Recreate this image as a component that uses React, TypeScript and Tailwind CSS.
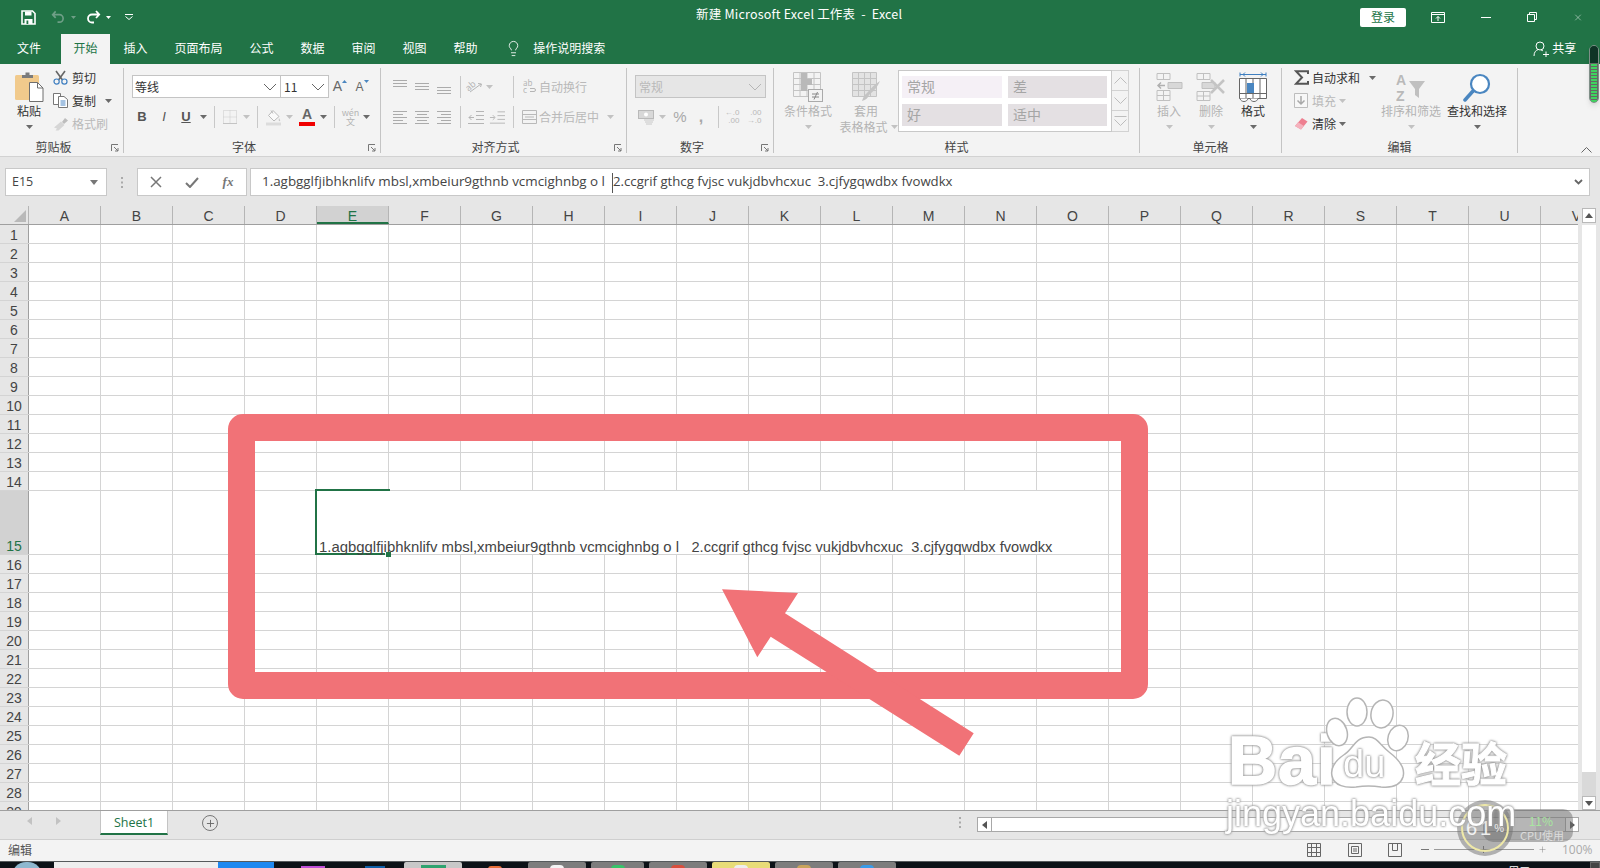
import React from 'react';
import { Lightbulb, Plus, X } from 'lucide-react';

const CJK = "font-['Noto_Sans_CJK_SC','Liberation_Sans',sans-serif]";

const Cell: React.FC<{ className?: string; children?: React.ReactNode }> = ({ className = '', children }) => (
  <div className={`flex shrink-0 items-center justify-center whitespace-nowrap ${className}`}>{children}</div>
);

const Caret = ({ dim = false }: { dim?: boolean }) => (
  <svg width="7" height="4" viewBox="0 0 7 4" className="shrink-0">
    <path d="M0 0h7L3.5 4z" fill={dim ? '#c2c2c2' : '#6a6a6a'} />
  </svg>
);

const Sep = ({ className = '' }: { className?: string }) => <div className={`h-[22px] w-px shrink-0 bg-[#c8c8c8] ${className}`} />;

const Chevron = ({ color = '#666' }: { color?: string }) => (
  <svg width="14" height="8" viewBox="0 0 14 8"><path d="M1 1l6 6 6-6" fill="none" stroke={color} strokeWidth="1" /></svg>
);

const Launcher = () => (
  <svg width="8" height="8" viewBox="0 0 8 8" className="absolute bottom-[1px] right-[4px]">
    <path d="M.5 7V.5H7M3 3l4 4M7 4v3H4" fill="none" stroke="#777" strokeWidth="1" />
  </svg>
);

const Lines = ({ rows, color = '#ababab' }: { rows: [number, number, number][]; color?: string }) => (
  <svg width="16" height="16" viewBox="0 0 16 16">
    {rows.map(([x1, x2, y], i) => <path key={i} d={`M${x1} ${y}.5H${x2}`} stroke={color} strokeWidth="1" />)}
  </svg>
);

const Group: React.FC<{ className: string; label: string; launcher?: boolean; children: React.ReactNode }> = ({ className, label, launcher, children }) => (
  <div className={`relative mt-[4px] flex h-[85px] shrink-0 flex-col border-r border-[#c4c4c4] ${className}`}>
    <div className="h-[70px] shrink-0">{children}</div>
    <div className={`h-[15px] text-center text-[12px] leading-[18px] text-[#444] ${launcher ? 'pr-[16px]' : ''}`}>{label}</div>
    {launcher && <Launcher />}
  </div>
);

const BigButton: React.FC<{ className: string; icon: React.ReactNode; dim?: boolean; label: string; label2?: string }> = ({ className, icon, dim, label, label2 }) => (
  <div className={`flex shrink-0 flex-col items-center ${className}`}>
    <div className="mt-[4px] flex h-[30px] items-center justify-center">{icon}</div>
    <div className={`h-[18px] whitespace-nowrap text-[12px] leading-[18px] ${dim ? 'text-[#b4b4b4]' : 'text-[#333]'}`}>{label}</div>
    {label2 ? (
      <div className="-mt-[1px] flex h-[16px] items-center gap-[3px] whitespace-nowrap pl-[5px] text-[12px] leading-[16px] text-[#b4b4b4]">{label2}<Caret dim /></div>
    ) : (
      <div className="mt-[4px] flex h-[6px] items-center"><Caret dim={dim} /></div>
    )}
  </div>
);

const PasteIcon = () => (
  <svg width="29" height="30" viewBox="0 0 29 30">
    <rect x="0" y="3" width="24" height="25" rx="1.5" fill="#f1ca8c" />
    <path d="M7 6V3h3.500V.5h4V3H18v3z" fill="#7b7b7b" />
    <path d="M14.500 10.500h8l5.500 5.500v13.500H14.500z" fill="#fff" stroke="#6f6f6f" />
    <path d="M22.500 10.500V16H28" fill="none" stroke="#6f6f6f" />
  </svg>
);
const ScissorsIcon = () => (
  <svg width="15" height="15" viewBox="0 0 15 15">
    <path d="M3 1l6.500 9M12 1L5.500 10" stroke="#666" strokeWidth="1.600" fill="none" />
    <circle cx="3.600" cy="11.600" r="2.600" fill="none" stroke="#3f7fc0" strokeWidth="1.200" />
    <circle cx="11.400" cy="11.600" r="2.600" fill="none" stroke="#3f7fc0" strokeWidth="1.200" />
  </svg>
);
const CopyIcon = () => (
  <svg width="15" height="15" viewBox="0 0 15 15">
    <path d="M.5.500h7v11h-7z" fill="#fff" stroke="#777" />
    <path d="M5.500 3.500H11l3.500 3v8h-9z" fill="#fff" stroke="#777" />
    <path d="M7.500 8h5M7.500 10h5M7.500 12h5" stroke="#4a86c5" />
  </svg>
);
const BrushIcon = () => (
  <svg width="16" height="14" viewBox="0 0 16 14">
    <path d="M9 5l3-4 3 2.500-4 3.500z" fill="#bdbdbd" />
    <path d="M1 10.500L8 4.500l3.500 3.500-6 5.500H2.500L4 11.500z" fill="#d6d6d6" />
  </svg>
);
const SaveIcon = () => (
  <svg width="15" height="15" viewBox="0 0 15 15">
    <path d="M1 1h10.500L14 3.500V14H1z" fill="none" stroke="#fff" strokeWidth="1.600" />
    <path d="M4 1.500h6.500v4H4zM3.500 9h8v5h-8z" fill="#fff" />
    <path d="M5.500 10.500h1.800V14H5.500z" fill="#217346" />
  </svg>
);
const UndoIcon = ({ color }: { color: string }) => (
  <svg width="15" height="14" viewBox="0 0 15 14">
    <path d="M5 1L1.800 4.500 5 8M2.500 4.500h6.500a4 4 0 0 1 0 8H7" fill="none" stroke={color} strokeWidth="1.800" />
  </svg>
);
const RedoIcon = () => (
  <svg width="15" height="14" viewBox="0 0 15 14">
    <path d="M10 1l3.200 3.500L10 8M12.500 4.500H6a4 4 0 0 0 0 8h2" fill="none" stroke="#fff" strokeWidth="1.800" />
  </svg>
);
const BorderIcon = () => (
  <svg width="14" height="14" viewBox="0 0 14 14">
    <path d="M.5.500h13v13H.5zM7 .5v13M.5 7h13" fill="none" stroke="#c9c9c9" strokeDasharray="1 1" />
    <path d="M0 13.500h14" stroke="#c4c4c4" />
  </svg>
);
const BucketIcon = () => (
  <svg width="16" height="17" viewBox="0 0 16 17">
    <path d="M7 1.500l6 6-5 4.500-5.500-5.500z" fill="#fafafa" stroke="#b9b9b9" />
    <path d="M5 1.500l2 3" stroke="#b9b9b9" />
    <path d="M13 9c1 1.500 1.500 2.500 1 3s-2 0-1-3z" fill="#c8c8c8" />
    <path d="M0 15h15" stroke="#dcdcdc" strokeWidth="3" />
  </svg>
);
const OrientIcon = () => (
  <svg width="17" height="15" viewBox="0 0 17 15">
    <text x="0" y="10" fontSize="9" fill="#b5b5b5" transform="rotate(-40 5 8)">ab</text>
    <path d="M4 13L15 5M12 4.500l3.500.5-1 3" fill="none" stroke="#b5b5b5" />
  </svg>
);
const WrapIcon = () => (
  <svg width="14" height="15" viewBox="0 0 14 15">
    <text x="0" y="7" fontSize="8" fill="#b5b5b5">ab</text>
    <text x="0" y="14" fontSize="8" fill="#b5b5b5">c</text>
    <path d="M7 9.500h4a1.500 1.500 0 0 1 0 3H7" fill="none" stroke="#b5b5b5" />
  </svg>
);
const MergeIcon = () => (
  <svg width="15" height="14" viewBox="0 0 15 14">
    <path d="M.5.500h14v13H.5zM.5 4.500h14M.5 9.500h14" fill="none" stroke="#b9b9b9" />
    <path d="M3 7h9" stroke="#b9b9b9" />
  </svg>
);
const IndentIcon = ({ flip = false }: { flip?: boolean }) => (
  <svg width="17" height="13" viewBox="0 0 17 13">
    <path d="M9 .5h8M9 4.500h8M9 8.500h8M1 12.500h16" stroke="#b5b5b5" />
    {flip ? <path d="M1 6.500h5M4 4l2.500 2.500L4 9" fill="none" stroke="#b5b5b5" /> : <path d="M2 6.500h5M4.500 4L2 6.500 4.500 9" fill="none" stroke="#b5b5b5" />}
  </svg>
);
const CondIcon = () => (
  <svg width="30" height="30" viewBox="0 0 30 30">
    <path d="M.5.500h27v24H.5zM7 .5v24M14 .5v24M21 .5v24M.5 6.500h27M.5 12.500h27M.5 18.500h27" fill="#f3f3f3" stroke="#c4c4c4" />
    <path d="M8 1h6v6h5v6h-5v6H8z" fill="#b9b9b9" />
    <rect x="15.500" y="17.500" width="14" height="12" fill="#f3f3f3" stroke="#aaa" />
    <path d="M19 22h7M19 25h7M24.500 20l-3.500 7.500" stroke="#888" fill="none" />
  </svg>
);
const TableIcon = () => (
  <svg width="29" height="30" viewBox="0 0 29 30">
    <path d="M.5.500h24v24H.5zM6.500.5v24M12.500.5v24M18.500.5v24M.5 6.500h24M.5 12.500h24M.5 18.500h24" fill="#e3e3e3" stroke="#c4c4c4" />
    <path d="M28 9c-2 5-6 10-11 14-1 3-3 5-7 6 1-3 2-6 5-8 4-5 8-9 13-12z" fill="#c4c4c4" />
  </svg>
);
const InsertIcon = () => (
  <svg width="27" height="28" viewBox="0 0 27 28">
    <path d="M1 .5h13v6H1zM7.500.5v6M1 17.500h13v10H1zM7.500 17.500v10M1 22.500h13" fill="none" stroke="#c0c0c0" />
    <path d="M12 9.500h14v6H12z" fill="#d8d8d8" stroke="#c0c0c0" />
    <path d="M2 12.500h7M5 9.500l-3 3 3 3" fill="none" stroke="#b0b0b0" strokeWidth="1.500" />
  </svg>
);
const DeleteIcon = () => (
  <svg width="30" height="28" viewBox="0 0 30 28">
    <path d="M1 .5h13v6H1zM7.500.5v6M1 18.500h13v9H1zM7.500 18.500v9M1 23h13" fill="none" stroke="#c0c0c0" />
    <path d="M6 9.500h13v6H6z" fill="#d8d8d8" stroke="#c0c0c0" />
    <path d="M15 7l13 13M28 7L15 20" stroke="#c4c4c4" strokeWidth="2.500" />
  </svg>
);
const FormatIcon = () => (
  <svg width="28" height="31" viewBox="0 0 28 31">
    <path d="M1 2.500h26M1 .5v4M27 .5v4M4 2.500l2-2M4 2.500l2 2M24 2.500l-2-2M24 2.500l-2 2" stroke="#3f7fc0" fill="none" />
    <path d="M.5 6.500h27v20H.5zM7 6.500v20M14 6.500v20M21 6.500v20M.5 21.500h27" fill="#fff" stroke="#666" />
    <rect x="8" y="11" width="7" height="10" fill="#4a86c0" />
    <path d="M1 26.500c1 4 7 4 8 0M11 26.500c1 4 7 4 8 0" fill="#fff" stroke="#666" />
  </svg>
);
const SortIcon = () => (
  <svg width="30" height="31" viewBox="0 0 30 31">
    <text x="0" y="13" fontSize="14" fontWeight="700" fill="#b9b9b9" fontFamily="Liberation Sans">A</text>
    <text x="0" y="29" fontSize="14" fontWeight="700" fill="#b9b9b9" fontFamily="Liberation Sans">Z</text>
    <path d="M13 9h16l-6 8v9l-4-3v-6z" fill="#c0c0c0" />
  </svg>
);
const FindIcon = () => (
  <svg width="28" height="29" viewBox="0 0 28 29">
    <circle cx="17" cy="11" r="9" fill="#fff" stroke="#4a86c0" strokeWidth="2.200" />
    <path d="M10 18L2 27" stroke="#4a86c0" strokeWidth="3.500" strokeLinecap="round" />
  </svg>
);
const SigmaIcon = () => (
  <svg width="15" height="15" viewBox="0 0 15 15">
    <path d="M14 4V1.200H2L8 7.500 2 13.800h12V11" fill="none" stroke="#555" strokeWidth="2" />
  </svg>
);

const Toolbar = () => (
  <div className={`flex h-[93px] shrink-0 border-b border-[#d2d2d2] bg-[#f3f3f3] ${CJK}`}>
    <Group className="w-[124px]" label="剪贴板" launcher>
      <div className="flex">
        <BigButton className="w-[58px]" icon={<PasteIcon />} label="粘贴" />
        <div className="-ml-[5px] -mt-[2px] flex flex-col text-[12px] text-[#333]">
          <div className="flex h-[23px] items-center gap-[4px]"><ScissorsIcon /><span>剪切</span></div>
          <div className="flex h-[23px] items-center gap-[4px]"><CopyIcon /><span>复制</span><span className="ml-[5px] flex"><Caret /></span></div>
          <div className="flex h-[23px] items-center gap-[3px] text-[#b9b9b9]"><BrushIcon /><span>格式刷</span></div>
        </div>
      </div>
    </Group>

    <Group className="w-[257px]" label="字体" launcher>
      <div className="pl-[8px] pt-[7px]">
        <div className="flex h-[23px] text-[12px] text-[#333]">
          <div className="flex w-[149px] items-center justify-between border border-[#c4c4c4] bg-white pl-[2px] pr-[3px]">等线<Chevron /></div>
          <div className="flex w-[48px] items-center justify-between border border-l-0 border-[#c4c4c4] bg-white pl-[3px] pr-[3px]">11<Chevron /></div>
          <Cell className="w-[22px] text-[14px] text-[#666]"><span className="font-['Liberation_Sans']">A</span><svg width="5" height="3" viewBox="0 0 5 3" className="-mt-[10px]"><path d="M0 3h5L2.500 0z" fill="#4a86c0" /></svg></Cell>
          <Cell className="w-[22px] text-[12px] text-[#666]"><span className="font-['Liberation_Sans']">A</span><svg width="5" height="3" viewBox="0 0 5 3" className="-mt-[10px]"><path d="M0 0h5L2.500 3z" fill="#4a86c0" /></svg></Cell>
        </div>
        <div className="mt-[8px] flex h-[22px] items-center font-['Liberation_Sans'] text-[13px] text-[#555]">
          <Cell className="w-[20px] font-bold">B</Cell>
          <Cell className="w-[24px] italic">I</Cell>
          <Cell className="w-[20px] font-bold underline">U</Cell>
          <Cell className="w-[15px]"><Caret /></Cell>
          <Sep className="ml-[3px]" />
          <Cell className="w-[29px]"><BorderIcon /></Cell>
          <Cell className="w-[4px]"><Caret dim /></Cell>
          <Sep className="ml-[9px]" />
          <Cell className="ml-[8px] w-[16px]"><BucketIcon /></Cell>
          <Cell className="w-[14px]"><Caret dim /></Cell>
          <Cell className="w-[22px]">
            <div className="flex flex-col items-center">
              <span className="text-[14px] font-bold leading-[13px] text-[#666]">A</span>
              <div className="mt-[1px] h-[4px] w-[16px] bg-[#f00000]" />
            </div>
          </Cell>
          <Cell className="w-[11px]"><Caret /></Cell>
          <Sep className="ml-[5px]" />
          <Cell className="ml-[9px] w-[13px]">
            <div className={`flex flex-col items-center text-[9px] leading-[9px] text-[#b4b4b4] ${CJK}`}><span>wén</span><span>文</span></div>
          </Cell>
          <Cell className="w-[18px]"><Caret /></Cell>
        </div>
      </div>
    </Group>

    <Group className="w-[246px]" label="对齐方式" launcher>
      <div className="pt-[7px] text-[12px] text-[#b9b9b9]">
        <div className="flex h-[23px] items-center">
          <Cell className="ml-[8px] w-[22px]"><Lines rows={[[1, 15, 1], [1, 15, 4], [1, 15, 7]]} /></Cell>
          <Cell className="w-[22px]"><Lines rows={[[1, 15, 4], [1, 15, 7], [1, 15, 10]]} /></Cell>
          <Cell className="w-[22px]"><Lines rows={[[1, 15, 8], [1, 15, 11], [1, 15, 14]]} /></Cell>
          <Sep className="ml-[5px]" />
          <Cell className="ml-[4px] w-[18px]"><OrientIcon /></Cell>
          <Cell className="w-[12px]"><Caret dim /></Cell>
          <Sep className="ml-[18px]" />
          <Cell className="ml-[8px] w-[16px]"><WrapIcon /></Cell>
          <span className="ml-[1px]">自动换行</span>
        </div>
        <div className="mt-[8px] flex h-[22px] items-center">
          <Cell className="ml-[8px] w-[22px]"><Lines rows={[[1, 15, 2], [1, 11, 5], [1, 15, 8], [1, 11, 11], [1, 15, 14]]} /></Cell>
          <Cell className="w-[22px]"><Lines rows={[[1, 15, 2], [3, 13, 5], [1, 15, 8], [3, 13, 11], [1, 15, 14]]} /></Cell>
          <Cell className="w-[22px]"><Lines rows={[[1, 15, 2], [5, 15, 5], [1, 15, 8], [5, 15, 11], [1, 15, 14]]} /></Cell>
          <Sep className="ml-[5px]" />
          <Cell className="w-[28px]"><IndentIcon /></Cell>
          <Cell className="w-[16px]"><IndentIcon flip /></Cell>
          <Sep className="ml-[8px]" />
          <Cell className="ml-[7px] w-[16px]"><MergeIcon /></Cell>
          <span className="ml-[2px]">合并后居中</span>
          <Cell className="w-[23px]"><Caret dim /></Cell>
        </div>
      </div>
    </Group>

    <Group className="w-[147px]" label="数字" launcher>
      <div className="pl-[8px] pt-[7px] text-[12px] text-[#b9b9b9]">
        <div className="flex h-[23px] w-[131px] items-center justify-between border border-[#c4c4c4] bg-[#e6e6e6] pl-[3px] pr-[3px]">常规<Chevron color="#b5b5b5" /></div>
        <div className="mt-[8px] flex h-[22px] items-center font-['Liberation_Sans']">
          <Cell className="w-[23px]">
            <svg width="17" height="15" viewBox="0 0 17 15"><rect x=".5" y=".5" width="15" height="8" fill="#d8d8d8" stroke="#b9b9b9" /><circle cx="8" cy="4.500" r="2" fill="#fff" /><path d="M6 10h10M7 12h8M8 14h6" stroke="#c8c8c8" /></svg>
          </Cell>
          <Cell className="w-[9px]"><Caret dim /></Cell>
          <Cell className="w-[26px] text-[15px] text-[#a8a8a8]">%</Cell>
          <Cell className="w-[16px] text-[16px] font-bold text-[#a8a8a8]">,</Cell>
          <Sep className="ml-[9px]" />
          <Cell className="w-[26px] text-[8px] leading-[8px]"><span className="flex flex-col items-end"><span>←.0</span><span>.00</span></span></Cell>
          <Cell className="w-[18px] text-[8px] leading-[8px]"><span className="flex flex-col items-end"><span>.00</span><span>→.0</span></span></Cell>
        </div>
      </div>
    </Group>

    <Group className="w-[366px]" label="样式">
      <div className="flex">
        <BigButton className="ml-[4px] w-[60px]" icon={<CondIcon />} dim label="条件格式" />
        <BigButton className="w-[56px]" icon={<TableIcon />} dim label="套用" label2="表格格式" />
        <div className="ml-[4px] mt-[2px] flex h-[62px] w-[214px] border border-[#c8c8c8] bg-white">
          <div className="grid h-[60px] flex-1 grid-cols-[100px_99px] content-start gap-x-[6px] gap-y-[6px] pl-[3px] pt-[5px] text-[14px] leading-[20px] text-[#a5a5a5]">
            <div className="h-[22px] bg-[#f5f0f6] pl-[5px]">常规</div>
            <div className="h-[22px] bg-[#e4e0e3] pl-[5px]">差</div>
            <div className="h-[22px] bg-[#e4e0e3] pl-[5px]">好</div>
            <div className="h-[22px] bg-[#e4e0e3] pl-[5px]">适中</div>
          </div>
        </div>
        <div className="mt-[2px] flex h-[62px] w-[17px] flex-col border border-l-0 border-[#d2d2d2] bg-[#f3f3f3]">
          <Cell className="h-[20px] border-b border-[#d2d2d2]"><svg width="13" height="7" viewBox="0 0 13 7"><path d="M.5 6.500l6-6 6 6" fill="none" stroke="#bdbdbd" /></svg></Cell>
          <Cell className="h-[20px] border-b border-[#d2d2d2]"><svg width="13" height="7" viewBox="0 0 13 7"><path d="M.5.500l6 6 6-6" fill="none" stroke="#bdbdbd" /></svg></Cell>
          <Cell className="h-[20px]"><svg width="13" height="10" viewBox="0 0 13 10"><path d="M.5.500h12M.5 3.500l6 6 6-6" fill="none" stroke="#bdbdbd" /></svg></Cell>
        </div>
      </div>
    </Group>

    <Group className="w-[142px]" label="单元格">
      <div className="flex pl-[8px]">
        <BigButton className="w-[42px]" icon={<InsertIcon />} dim label="插入" />
        <BigButton className="w-[42px]" icon={<DeleteIcon />} dim label="删除" />
        <BigButton className="w-[42px]" icon={<FormatIcon />} label="格式" />
      </div>
    </Group>

    <Group className="w-[236px]" label="编辑">
      <div className="flex">
        <div className="-mt-[2px] w-[99px] pl-[11px] text-[12px] text-[#333]">
          <div className="flex h-[23px] items-center">
            <Cell className="w-[16px]"><SigmaIcon /></Cell>
            <span className="ml-[3px]">自动求和</span><span className="ml-[9px] flex"><Caret /></span>
          </div>
          <div className="flex h-[23px] items-center text-[#b9b9b9]">
            <Cell className="w-[16px]"><svg width="14" height="15" viewBox="0 0 14 15"><path d="M.5.500h13v14H.5z" fill="#f7f7f7" stroke="#bdbdbd" /><path d="M7 3v8M3.500 7.500L7 11l3.500-3.500" fill="none" stroke="#a8a8a8" strokeWidth="1.500" /></svg></Cell>
            <span className="ml-[3px]">填充</span><span className="ml-[3px] flex"><Caret dim /></span>
          </div>
          <div className="flex h-[23px] items-center">
            <Cell className="w-[16px]"><svg width="14" height="13" viewBox="0 0 14 13"><path d="M8 1l5.500 3.500L7 12.500 1 9z" fill="#ee7f90" /><path d="M1 9l3-3.700 6 3.700-3 3.500z" fill="#f4b2bd" /></svg></Cell>
            <span className="ml-[3px]">清除</span><span className="ml-[3px] flex"><Caret /></span>
          </div>
        </div>
        <BigButton className="w-[60px]" icon={<SortIcon />} dim label="排序和筛选" />
        <BigButton className="ml-[6px] w-[60px]" icon={<FindIcon />} label="查找和选择" />
      </div>
    </Group>

    <div className="flex flex-1 items-end justify-end pb-[3px] pr-[8px]">
      <svg width="11" height="6" viewBox="0 0 11 6"><path d="M.5 5.500l5-5 5 5" fill="none" stroke="#666" /></svg>
    </div>
  </div>
);

const tabs = ['插入', '页面布局', '公式', '数据', '审阅', '视图', '帮助'];
const TitleBar = () => (
  <div className="shrink-0 bg-[#217346] text-white">
    <div className="relative flex h-[34px] items-center">
      <Cell className="ml-[21px] w-[15px]"><SaveIcon /></Cell>
      <Cell className="ml-[15px] w-[14px]"><UndoIcon color="#6f9f87" /></Cell>
      <Cell className="ml-[3px] w-[10px]"><svg width="5" height="3" viewBox="0 0 5 3"><path d="M0 0h5L2.500 3z" fill="#6f9f87" /></svg></Cell>
      <Cell className="ml-[8px] w-[15px]"><RedoIcon /></Cell>
      <Cell className="ml-[2px] w-[10px]"><svg width="5" height="3" viewBox="0 0 5 3"><path d="M0 0h5L2.500 3z" fill="#fff" /></svg></Cell>
      <Cell className="ml-[11px] w-[9px]"><svg width="8" height="6" viewBox="0 0 8 6"><path d="M0 .5h8M.5 2.500L4 5.500l3.500-3" fill="none" stroke="#fff" /></svg></Cell>
      <div className={`ml-[563px] w-[209px] whitespace-pre pb-[5px] text-[12.5px] tracking-[0.2px] ${CJK}`}>新建 Microsoft Excel 工作表  -  Excel</div>
      <div className={`ml-[455px] flex h-[19px] w-[46px] items-center justify-center rounded-[2px] bg-white text-[12px] text-[#217346] ${CJK}`}>登录</div>
      <Cell className="ml-[25px] w-[14px]"><svg width="14" height="11" viewBox="0 0 14 11"><path d="M.5.500h13v10H.5zM.5 2.500h13M7 9V4.500M5 6.500l2-2 2 2" fill="none" stroke="#fff" /></svg></Cell>
      <Cell className="ml-[36px] w-[10px]"><div className="h-px w-[10px] bg-white" /></Cell>
      <Cell className="ml-[36px] w-[10px]"><svg width="10" height="10" viewBox="0 0 10 10"><path d="M.5 2.500h7v7h-7zM2.500 2.500v-2h7v7h-2" fill="none" stroke="#fff" /></svg></Cell>
      <Cell className="ml-[36px] w-[10px]"><X size={15} strokeWidth={1.1} /></Cell>
    </div>
    <div className={`flex h-[30px] items-stretch pb-[2px] pl-[3px] text-[12px] ${CJK}`}>
      <div className="flex items-center px-[14px]">文件</div>
      <div className="-mb-[2px] ml-[6px] flex w-[49px] items-center justify-center bg-[#f3f3f3] pb-[2px] text-[#217346]">开始</div>
      {tabs.map((t) => <div key={t} className="flex items-center px-[13.5px]">{t}</div>)}
      <div className="ml-[14px] flex items-center"><Lightbulb size={17} strokeWidth={1.2} /></div>
      <div className="ml-[11px] flex items-center">操作说明搜索</div>
      <div className="ml-[928px] flex items-center">
        <svg width="16" height="17" viewBox="0 0 16 17"><circle cx="7" cy="6" r="4" fill="none" stroke="#fff" /><path d="M1 16c0-4 2-6 4.500-6.500M8 10c1 .2 1.500.5 2 1M10 14.500h6M13 11.500v6" fill="none" stroke="#fff" /></svg>
      </div>
      <div className="ml-[3px] flex items-center">共享</div>
    </div>
  </div>
);

const FormulaBar = () => (
  <div className="flex h-[49px] shrink-0 items-start bg-[#e6e6e6] pl-[5px] pt-[11px] text-[#444]">
    <div className="flex h-[28px] w-[102px] items-center justify-between border border-[#c8c8c8] bg-white pl-[6px] pr-[8px] font-['Open_Sans'] text-[12.5px]">
      E15
      <svg width="8" height="5" viewBox="0 0 8 5"><path d="M0 0h8L4 5z" fill="#777" /></svg>
    </div>
    <Cell className="h-[28px] w-[30px]"><svg width="3" height="11" viewBox="0 0 3 11"><path d="M0 0h2v2H0zM0 4.500h2v2H0zM0 9h2v2H0z" fill="#aaa" /></svg></Cell>
    <div className="flex h-[28px] w-[110px] items-center border border-[#c8c8c8] bg-white">
      <Cell className="w-[36px]"><svg width="12" height="12" viewBox="0 0 12 12"><path d="M1 1l10 10M11 1L1 11" stroke="#777" strokeWidth="1.500" /></svg></Cell>
      <Cell className="w-[36px]"><svg width="14" height="11" viewBox="0 0 14 11"><path d="M1 6l4 4 8-9" fill="none" stroke="#777" strokeWidth="2" /></svg></Cell>
      <Cell className="w-[36px] font-['Liberation_Serif'] text-[13px] font-bold italic text-[#777]">fx</Cell>
    </div>
    <div className="ml-[3px] flex h-[28px] w-[1340px] items-center border border-[#c8c8c8] bg-white pl-[11px] pr-[6px]">
      <span className="flex-1 whitespace-pre font-['Open_Sans'] text-[13.4px] text-[#444]">
        1.agbgglfjibhknlifv mbsl,xmbeiur9gthnb vcmcighnbg o l<span className="ml-[7px] inline-block h-[20px] w-px bg-[#555] align-middle" /><span className="text-[13.2px]">2.ccgrif gthcg fvjsc vukjdbvhcxuc  3.cjfygqwdbx fvowdkx</span>
      </span>
      <svg width="9" height="6" viewBox="0 0 9 6"><path d="M1 1l3.500 3.500L8 1" fill="none" stroke="#666" strokeWidth="1.800" /></svg>
    </div>
  </div>
);

const columns = ['A', 'B', 'C', 'D', 'E', 'F', 'G', 'H', 'I', 'J', 'K', 'L', 'M', 'N', 'O', 'P', 'Q', 'R', 'S', 'T', 'U', 'V'];
const rows = Array.from({ length: 29 }, (_, i) => i + 1);

const Sheet = () => (
  <div className="flex h-[605px] shrink-0 border-b border-[#9f9f9f]">
    <div className="w-[1578px] shrink-0 overflow-hidden bg-white font-['Liberation_Sans']">
      <div className="flex h-[19px] border-b border-[#9f9f9f] bg-[#e6e6e6] text-[14px] leading-[20px] text-[#444]">
        <div className="relative w-[29px] shrink-0 border-r border-[#b5b5b5]">
          <svg width="12" height="12" viewBox="0 0 12 12" className="absolute bottom-[2px] right-[2px]"><path d="M12 0v12H0z" fill="#b9b9b9" /></svg>
        </div>
        {columns.map((c) => (
          <div key={c} className={`h-[18px] w-[72px] shrink-0 border-r border-[#b5b5b5] text-center ${c === 'E' ? 'border-b-2 border-b-[#217346] bg-[#d2d2d2] text-[#217346]' : ''}`}>{c}</div>
        ))}
      </div>
      {rows.map((r) => (
        <div key={r} className={`flex border-b border-[#d4d4d4] ${r === 15 ? 'h-[64px]' : 'h-[19px]'}`}>
          <div className={`flex w-[29px] shrink-0 items-end justify-center border-r border-[#9f9f9f] text-[14px] leading-[16px] ${r === 15 ? 'bg-[#d2d2d2] text-[#217346]' : 'bg-[#e6e6e6] text-[#444]'}`}>{r}</div>
          {columns.map((c, i) => {
            const isActive = r === 15 && c === 'E';
            const hideEdge = r === 15 && i >= 4 && i <= 13;
            return (
              <div key={c} className={`relative flex w-[72px] shrink-0 items-end ${hideEdge ? '' : 'border-r border-[#d4d4d4]'}`}>
                {isActive && (
                  <>
                    <span className="z-10 -mb-[1px] whitespace-pre pl-[2px] text-[14.9px] leading-[15px] text-[#444]">1.agbgglfjibhknlifv mbsl,xmbeiur9gthnb vcmcighnbg o l   <span className="text-[14.6px]">2.ccgrif gthcg fvjsc vukjdbvhcxuc  3.cjfygqwdbx fvowdkx</span></span>
                    <div className="absolute -left-[2px] -top-[2px] bottom-[-1px] w-[70px] border-b-2 border-l-2 border-t-2 border-[#217346]" />
                    <div className="absolute -top-[2px] left-[68px] h-[2px] w-[5px] bg-[#217346]" />
                    <div className="absolute -bottom-[3px] right-[-2px] z-10 h-[5px] w-[5px] bg-[#217346]" />
                  </>
                )}
              </div>
            );
          })}
        </div>
      ))}
    </div>
    <div className="flex w-[22px] shrink-0 flex-col items-center bg-[#e6e6e6] pt-[2px]">
      <Cell className="h-[15px] w-[14px] border border-[#b9b9b9] bg-white"><svg width="8" height="5" viewBox="0 0 8 5"><path d="M0 5h8L4 0z" fill="#555" /></svg></Cell>
      <div className="mt-[2px] h-[549px] w-[14px] bg-white" />
      <div className="h-[24px] w-[14px] bg-[#d9d9d9]" />
      <Cell className="h-[14px] w-[14px] border border-[#b9b9b9] bg-white"><svg width="8" height="5" viewBox="0 0 8 5"><path d="M0 0h8L4 5z" fill="#555" /></svg></Cell>
    </div>
  </div>
);

const TabStrip = () => (
  <div className="flex h-[28px] shrink-0 items-start bg-[#e6e6e6]">
    <Cell className="ml-[24px] mt-[6px] w-[10px]"><svg width="5" height="8" viewBox="0 0 5 8"><path d="M5 0v8L0 4z" fill="#c2c2c2" /></svg></Cell>
    <Cell className="ml-[19px] mt-[6px] w-[10px]"><svg width="5" height="8" viewBox="0 0 5 8"><path d="M0 0v8l5-4z" fill="#c2c2c2" /></svg></Cell>
    <div className="ml-[37px] flex h-[24px] w-[68px] items-center justify-center border-x border-b-2 border-[#217346] border-x-[#c4c4c4] bg-white pt-[2px] font-['Open_Sans'] text-[12.5px] text-[#217346]">Sheet1</div>
    <Cell className="ml-[34px] mt-[4px] h-[16px] w-[16px] rounded-full border border-[#777] text-[#666]"><Plus size={11} strokeWidth={2} /></Cell>
    <Cell className="ml-[739px] mt-[6px] w-[6px]"><svg width="3" height="11" viewBox="0 0 3 11"><path d="M0 0h2v2H0zM0 4.500h2v2H0zM0 9h2v2H0z" fill="#aaa" /></svg></Cell>
    <div className="ml-[14px] mt-[6px] flex h-[15px] w-[602px] border border-[#a8a8a8] bg-[#e6e6e6]">
      <Cell className="w-[14px] border-r border-[#a8a8a8] bg-white"><svg width="5" height="8" viewBox="0 0 5 8"><path d="M5 0v8L0 4z" fill="#555" /></svg></Cell>
      <div className="w-[544px] bg-white" />
      <div className="flex-1" />
      <Cell className="w-[13px] border-l border-[#a8a8a8] bg-white"><svg width="5" height="8" viewBox="0 0 5 8"><path d="M0 0v8l5-4z" fill="#555" /></svg></Cell>
    </div>
  </div>
);

const StatusBar = () => (
  <div className={`flex h-[22px] shrink-0 items-center border-t border-[#cfcfcf] bg-[#f3f3f3] pb-[2px] pl-[8px] text-[12px] text-[#555] ${CJK}`}>
    <span className="w-[1299px]">编辑</span>
    <Cell className="w-[14px]"><svg width="14" height="14" viewBox="0 0 14 14"><path d="M.5.500h13v13H.5zM4.500.5v13M9.500.5v13M.5 4.500h13M.5 9.500h13" fill="none" stroke="#666" /></svg></Cell>
    <Cell className="ml-[27px] w-[14px]"><svg width="14" height="14" viewBox="0 0 14 14"><path d="M.5.500h13v13H.5zM3.500 3.500h7v7h-7zM5 6h4M5 8h4" fill="none" stroke="#666" /></svg></Cell>
    <Cell className="ml-[26px] w-[14px]"><svg width="14" height="14" viewBox="0 0 14 14"><path d="M.5.500h13v13H.5zM4.500.5v7h5V.5" fill="none" stroke="#666" /></svg></Cell>
    <div className="ml-[19px] h-px w-[8px] bg-[#777]" />
    <div className="relative ml-[5px] h-px w-[100px] bg-[#9a9a9a]">
      <div className="absolute left-[49px] -top-[3px] h-[7px] w-px bg-[#777]" />
    </div>
    <div className="ml-[4px] flex text-[#777]"><Plus size={9} strokeWidth={1.2} /></div>
    <span className="ml-[15px] font-['Open_Sans'] text-[#aaa]">100%</span>
  </div>
);

const taskButtons = ['w-[58px]', 'w-[53px]', 'w-[58px]', 'w-[58px]', 'w-[58px]', 'w-[58px]'];
const taskColors = ['bg-[#f4f4f4]', 'bg-[#38c46a]', 'bg-[#d94f3d]', 'bg-[#eeeeee]', 'bg-[#c9a45c]', 'bg-[#3a9be8]'];
const Taskbar = () => (
  <div className={`flex h-[8px] shrink-0 items-start overflow-hidden border-t border-[#565a5c] bg-[#0c1217] ${CJK}`}>
    <div className="ml-[12px] h-[14px] w-[30px] shrink-0 rounded-t-full bg-[#8fb8cf]" />
    <div className="ml-[12px] h-[7px] w-[164px] shrink-0 bg-[#eeeeee]" />
    <div className="h-[7px] w-[56px] shrink-0 bg-[#1e88f0]" />
    <div className="ml-[27px] mt-[4px] h-[3px] w-[24px] shrink-0 bg-[#c04fd8]" />
    <div className="ml-[40px] mt-[4px] h-[3px] w-[20px] shrink-0 bg-[#0e5fa8]" />
    <div className="ml-[19px] flex h-[7px] w-[58px] shrink-0 justify-center rounded-t-[2px] bg-[#c8c8c8] pt-[3px]"><div className="h-[4px] w-[25px] bg-[#2fa36f]" /></div>
    <div className="ml-[26px] mt-[4px] h-[3px] w-[14px] shrink-0 rounded-t-full bg-[#e8703a]" />
    <div className="ml-[26px] flex shrink-0 gap-[5px]">
      {taskButtons.map((w, i) => (
        <div key={i} className={`flex h-[7px] justify-center rounded-t-[2px] ${w} ${i === 3 ? 'bg-[#e8dc78]' : 'bg-[#7d7d7d]'}`}>
          <div className={`mt-[3px] h-[4px] w-[14px] rounded-t-full ${taskColors[i]}`} />
        </div>
      ))}
    </div>
    <span className="ml-[353px] mt-[3px] text-[11px] leading-[13px] text-white">1095</span>
    <span className="ml-[205px] mt-[3px] text-[11px] leading-[13px] text-white">20:40 周三</span>
    <div className="ml-auto h-[7px] w-[10px] border border-[#666] bg-[#444]" />
  </div>
);

const Annotation = () => (
  <>
    <div className="absolute left-[228px] top-[414px] h-[285px] w-[920px] rounded-[15px] border-[27px] border-[#f17277]" />
    <svg width="320" height="190" viewBox="700 575 320 190" className="absolute left-[700px] top-[575px]">
      <path d="M722 589.300L798 593 785 613.300 973.700 733.300 959.300 755.700 770.700 636.700 757.300 657.300z" fill="#f17277" />
    </svg>
  </>
);

const CpuWidget = () => (
  <>
    <div className={`absolute left-[1483px] top-[809px] flex h-[33px] w-[90px] flex-col items-end rounded-[10px] bg-[#6e6e6e]/50 pr-[9px] pt-[4px] ${CJK}`}>
      <span className="pr-[11px] text-[12px] leading-[15px] text-[#a8e6a0]">11%</span>
      <span className="text-[11px] leading-[14px] text-white/60">CPU使用</span>
    </div>
    <div className="absolute left-[1457px] top-[800px] flex h-[56px] w-[56px] items-center justify-center rounded-full bg-[#6e6e6e]/50">
      <div className="flex h-[48px] w-[48px] items-center justify-center rounded-full border-2 border-[#efe9a8] font-['Liberation_Sans'] text-[20px] tracking-[3px] text-white/85">
        61<span className="text-[11px] tracking-normal">%</span>
      </div>
    </div>
  </>
);

const Watermark = () => {
  const glow = '[filter:drop-shadow(0_0_1px_#909090)_drop-shadow(0_0_1px_#b5b5b5)]';
  return (
    <>
      <div className={`absolute left-[1228px] top-[724px] font-['Liberation_Sans'] text-[68px] font-bold leading-[72px] tracking-[1px] text-white [-webkit-text-stroke:1.5px_#fff] ${glow}`}>Bai</div>
      <svg width="90" height="100" viewBox="0 0 90 100" className="absolute left-[1325px] top-[695px] blur-[0.4px]">
        <g fill="#fff" stroke="#b5b5b5" strokeWidth="1.500">
          <ellipse cx="12" cy="37" rx="10" ry="14" transform="rotate(-18 12 37)" />
          <ellipse cx="32" cy="17" rx="10" ry="14" />
          <ellipse cx="57" cy="19" rx="11" ry="14" transform="rotate(10 57 19)" />
          <ellipse cx="73" cy="43" rx="10" ry="13" transform="rotate(18 73 43)" />
          <path d="M44 42c8 0 11 8 20 15 12 9 16 18 14 25-3 9-12 11-22 10-7-1-18-1-25 0-10 1-22-1-24-11-2-9 4-16 13-22 8-5 10-17 24-17z" />
        </g>
      </svg>
      <div className={`absolute left-[1343px] top-[744px] font-['Liberation_Sans'] text-[38px] leading-[40px] text-white ${glow}`}>du</div>
      <div className={`absolute left-[1415px] top-[731px] text-[46px] font-bold leading-[60px] text-white [-webkit-text-stroke:1px_#fff] ${CJK} ${glow}`}>经验</div>
      <div className={`absolute left-[1226px] top-[792px] font-['Liberation_Sans'] text-[36px] leading-[44px] text-white ${glow}`}>jingyan.baidu.com</div>
    </>
  );
};

const Meter = () => (
  <div className="absolute left-[1589px] top-[45px] flex h-[58px] w-[10px] flex-col overflow-hidden rounded-[5px] border border-[#7f8f88] shadow-md">
    <div className="h-[18px] bg-[#0f3326]" />
    <div className="flex flex-1 flex-col gap-[1px] bg-[#666] px-[1px] pt-[1px]">
      {Array.from({ length: 13 }, (_, i) => <div key={i} className="h-[2px] shrink-0 bg-[#3fd45f]" />)}
    </div>
  </div>
);

export default function App() {
  return (
    <div className="relative flex h-[868px] w-[1600px] flex-col overflow-hidden bg-white font-['Liberation_Sans',sans-serif]">
      <TitleBar />
      <Toolbar />
      <FormulaBar />
      <Sheet />
      <TabStrip />
      <StatusBar />
      <Taskbar />
      <Annotation />
      <Meter />
      <CpuWidget />
      <Watermark />
    </div>
  );
}
